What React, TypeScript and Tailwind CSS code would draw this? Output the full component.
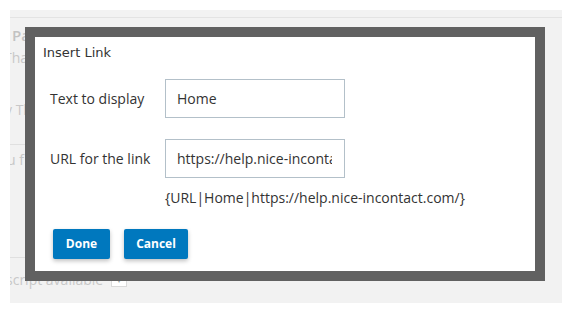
export default function App() {
    return (
        <div className="w-[580px] h-[315px] bg-white pt-[10px] pl-[10px] font-['Open_Sans',sans-serif]">
            <div className="relative w-[552px] h-[293px] bg-[#f2f2f2] overflow-hidden">
                {/* Page behind the dialog */}
                <div className="h-[7px]" />
                <div className="h-px bg-[#e3e3e3]" />
                <div className="pl-[2px] pt-[7px] text-[15px] font-semibold text-[#c2c2c2] leading-[20px]">Pa</div>
                <div className="-ml-[6px] pt-[3px] text-[14px] text-[#c8c8c8] leading-[20px]">Tha</div>
                <div className="-ml-[5px] pt-[32px] text-[14px] text-[#c8c8c8] leading-[20px]">y Th</div>
                <div className="h-[24px]" />
                <div className="w-[40px] h-px bg-[#e0e0e0]" />
                <div className="-ml-[3px] pt-[5px] text-[14px] text-[#c8c8c8] leading-[20px]">u f</div>
                <div className="h-[87px]" />
                <div className="w-[40px] h-px bg-[#e0e0e0]" />
                <div className="-ml-[4px] pt-[12px] flex items-center gap-[8px] text-[14px] text-[#c8c8c8] leading-[20px]">
                    <span>script available</span>
                    <span className="w-[16px] h-[14px] border border-[#dadada] bg-white text-[8px] leading-[12px] text-center text-[#9aa]">▾</span>
                </div>

                {/* Insert Link dialog */}
                <div className="absolute left-[15px] top-[17px] w-[520px] h-[254px] border-[10px] border-[#616161] bg-white">
                    <div className="pl-[8px] pt-[8px] text-[13px] leading-[16px] text-[#333] font-['DejaVu_Sans',sans-serif]">
                        Insert Link
                    </div>
                    <div className="mt-[18px] flex items-center">
                        <div className="w-[130px] pl-[15px] text-[14px] text-[#333]">Text to display</div>
                        <input
                            readOnly
                            value="Home"
                            className="w-[180px] h-[39px] border border-[#b3c0c9] px-[11px] text-[14px] text-[#333] outline-none"
                        />
                    </div>
                    <div className="mt-[21px] flex items-center">
                        <div className="w-[130px] pl-[15px] text-[14px] text-[#333]">URL for the link</div>
                        <input
                            readOnly
                            value="https://help.nice-incontact.com/"
                            className="w-[180px] h-[39px] border border-[#b3c0c9] pl-[11px] pr-[12px] text-[14px] text-[#333] outline-none"
                        />
                    </div>
                    <div className="mt-[10px] pl-[130px] text-[14px] leading-[20px] text-[#333] whitespace-nowrap">
                        {'{URL|Home|https://help.nice-incontact.com/}'}
                    </div>
                    <div className="mt-[21px] pl-[18px] flex gap-[14px]">
                        <button className="w-[57px] h-[30px] rounded-[2px] bg-[#0078be] text-white text-[12px] font-bold shadow-[0_2px_4px_rgba(0,0,0,0.25)]">
                            Done
                        </button>
                        <button className="w-[64px] h-[30px] rounded-[2px] bg-[#0078be] text-white text-[12px] font-bold shadow-[0_2px_4px_rgba(0,0,0,0.25)]">
                            Cancel
                        </button>
                    </div>
                </div>
            </div>
        </div>
    );
}
